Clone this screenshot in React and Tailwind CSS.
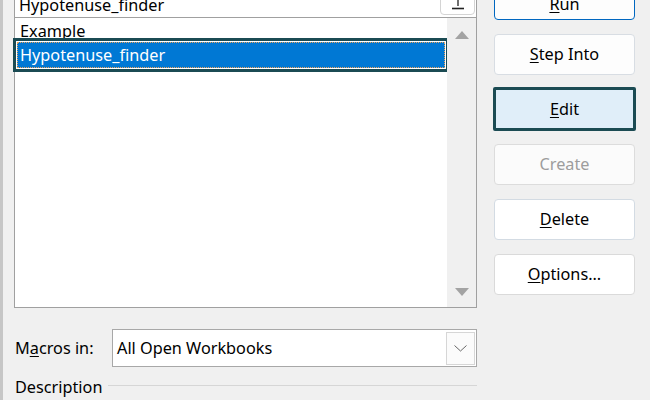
import React from "react";

function Btn({ children, className = "" }) {
  return (
    <div
      className={
        "h-[41px] rounded-[4px] flex items-center justify-center " +
        className
      }
    >
      {children}
    </div>
  );
}

export default function App() {
  return (
    <div className="w-[650px] h-[400px] overflow-hidden bg-[#f0f0f0] flex font-['Noto_Sans',sans-serif] text-[16.25px] text-black">
      <div className="w-[3px] shrink-0 bg-[#c6c6c6]" />
      <div className="ml-[11px] w-[463px] shrink-0 flex flex-col">
        {/* name input */}
        <div className="relative h-[34px] -mt-[17px] bg-white border-x border-t border-[#a0a0a0] flex items-end pl-[4px] pb-[2px]">
          <span className="leading-[20px]">Hypotenuse_finder</span>
          <div className="absolute right-[1px] bottom-[2px] w-[35px] h-[24px] bg-white border border-[#d4d4d4] rounded-[4px] flex justify-center">
            <svg width="14" height="22" viewBox="0 0 14 22" className="mt-[1px]">
              <path d="M7 0 V 13" stroke="#222" strokeWidth="1.3" fill="none" />
              <path d="M1 15.5 H 13" stroke="#222" strokeWidth="1.6" fill="none" />
            </svg>
          </div>
        </div>
        {/* list */}
        <div className="h-[291px] bg-white border border-[#a0a0a0] flex">
          <div className="flex-1 flex flex-col">
            <div className="mt-[2px] h-[22px] leading-[22px] pl-[5px]">Example</div>
            <div className="mx-[2px] h-[26px] bg-[#0078d4] outline-[3px] outline-solid outline-[#1b4b53] outline-offset-[1px] border border-dotted border-[#e9a35a] text-white pl-[2px] leading-[24px]">
              Hypotenuse_finder
            </div>
          </div>
          <div className="w-[29px] bg-[#f0f0f0] flex flex-col items-center justify-between pt-[13px] pb-[11px] pl-[1px]">
            <svg width="14" height="8" viewBox="0 0 14 8">
              <path d="M7 0 L14 8 L0 8 Z" fill="#a3a3a3" />
            </svg>
            <svg width="14" height="8" viewBox="0 0 14 8">
              <path d="M0 0 L14 0 L7 8 Z" fill="#a3a3a3" />
            </svg>
          </div>
        </div>
        {/* macros in */}
        <div className="mt-[21px] flex items-center">
          <div className="w-[98px] pl-[1px] leading-[24px]">
            M<u className="underline-offset-[2px]">a</u>cros in:
          </div>
          <div className="w-[365px] h-[38px] bg-white border border-[#a8a8a8] flex items-center pl-[4px] pr-[1px]">
            <span className="flex-1">All Open Workbooks</span>
            <div className="w-[29px] h-[33px] bg-[#fbfbfb] border border-[#d6d6d6] flex items-center justify-center">
              <svg width="13" height="7" viewBox="0 0 13 7">
                <path d="M0.5 0.5 L6.5 6 L12.5 0.5" stroke="#666" strokeWidth="1" fill="none" />
              </svg>
            </div>
          </div>
        </div>
        {/* description */}
        <div className="mt-[8px] flex items-center">
          <span className="pl-[1px] leading-[24px]">Description</span>
          <div className="flex-1 h-px bg-[#d6d6d6] ml-[6px] -mt-[3px]" />
        </div>
      </div>
      {/* buttons */}
      <div className="ml-[17px] w-[141px] shrink-0 flex flex-col gap-[14px] -mt-[21px]">
        <Btn className="border border-[#0067c0] bg-[#fdfdfd] pt-[10px]">
          <span><u className="underline-offset-[2px]">R</u>un</span>
        </Btn>
        <Btn className="border border-[#d8dde3] bg-[#fdfdfd]">
          <span><u className="underline-offset-[2px]">S</u>tep Into</span>
        </Btn>
        <div className="-mx-[1px] -mt-[2px] -mb-[1px] h-[44px] border-[3px] border-[#1b4b53] bg-[#e0eef9] rounded-[2px] flex items-center justify-center">
          <span><u className="underline-offset-[2px]">E</u>dit</span>
        </div>
        <Btn className="border border-[#dcdcdc] bg-[#fbfbfb] text-[#9d9d9d]">
          <span>Create</span>
        </Btn>
        <Btn className="border border-[#d3dbe3] bg-white">
          <span><u className="underline-offset-[2px]">D</u>elete</span>
        </Btn>
        <Btn className="border border-[#dadada] bg-white">
          <span><u className="underline-offset-[2px]">O</u>ptions...</span>
        </Btn>
      </div>
    </div>
  );
}
